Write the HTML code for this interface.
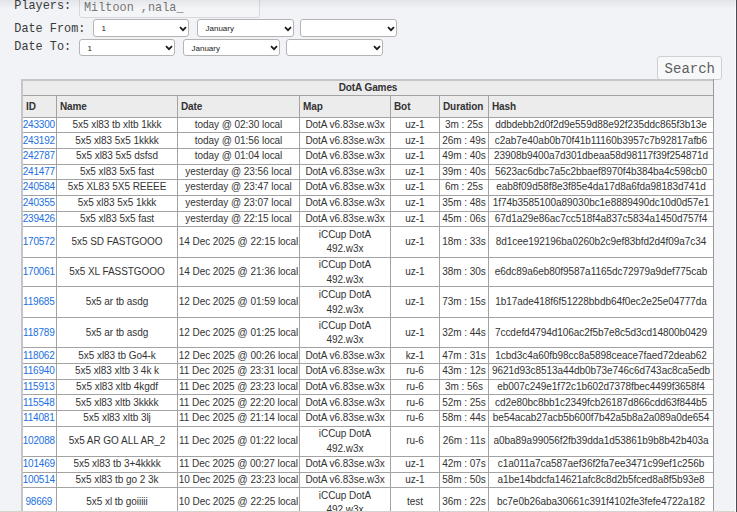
<!DOCTYPE html><html><head><meta charset="utf-8"><style>
html,body{margin:0;padding:0;}
body{width:737px;height:512px;overflow:hidden;background:#f1f3f7;position:relative;font-family:"Liberation Sans",sans-serif;}
.a{position:absolute;}
.m{font-family:"Liberation Mono",monospace;}
.c{position:absolute;letter-spacing:-0.05px;display:flex;align-items:center;justify-content:center;text-align:center;font-size:10px;line-height:14.3px;color:#333;white-space:nowrap;}
.h{position:absolute;letter-spacing:-0.1px;display:flex;align-items:center;font-size:10px;font-weight:bold;color:#333;white-space:nowrap;}
.t{position:absolute;letter-spacing:-0.05px;text-align:center;font-size:10px;line-height:14.3px;color:#333;white-space:nowrap;}
.id{color:#2170e0;margin-left:-0.7px;letter-spacing:-0.2px;}
.sel{position:absolute;background:#fff;border:1px solid #b4b4b4;border-radius:3px;box-sizing:border-box;font-size:8px;color:#222;}
.sel span{position:absolute;left:7.5px;top:4px;line-height:9px;}
.chev{position:absolute;right:5px;top:5px;}
</style></head><body>

<div class="a m" style="left:14.3px;top:-0.07px;font-size:11.85px;line-height:13.43px;color:#3a3a3a;transform:scaleY(1.13);transform-origin:0 9.87px;white-space:pre;">Players:</div>
<div class="a" style="left:79px;top:-6px;width:181px;height:24px;box-sizing:border-box;border:1px solid #d8d9dc;border-radius:3px;background:#f4f5f7;"></div>
<div class="a m" style="left:84.0px;top:1.53px;font-size:11.85px;line-height:13.43px;color:#777;transform:scaleY(1.13);transform-origin:0 9.87px;white-space:pre;">Miltoon ,nala_</div>
<div class="a m" style="left:14.3px;top:22.73px;font-size:11.85px;line-height:13.43px;color:#3a3a3a;transform:scaleY(1.13);transform-origin:0 9.87px;white-space:pre;">Date From:</div>
<div class="a m" style="left:14.3px;top:41.33px;font-size:11.85px;line-height:13.43px;color:#3a3a3a;transform:scaleY(1.13);transform-origin:0 9.87px;white-space:pre;">Date To:</div>
<div class="sel" style="left:93px;top:19px;width:96px;height:18px;"><span>1</span></div>
<svg class="a" style="left:179px;top:25.5px" width="8" height="6" viewBox="0 0 8 6"><path d="M1 1.2 L4 4.2 L7 1.2" fill="none" stroke="#1a1a1a" stroke-width="1.7"/></svg>
<div class="sel" style="left:197px;top:19px;width:97px;height:18px;"><span>January</span></div>
<svg class="a" style="left:284px;top:25.5px" width="8" height="6" viewBox="0 0 8 6"><path d="M1 1.2 L4 4.2 L7 1.2" fill="none" stroke="#1a1a1a" stroke-width="1.7"/></svg>
<div class="sel" style="left:300px;top:19px;width:97px;height:18px;"><span></span></div>
<svg class="a" style="left:387px;top:25.5px" width="8" height="6" viewBox="0 0 8 6"><path d="M1 1.2 L4 4.2 L7 1.2" fill="none" stroke="#1a1a1a" stroke-width="1.7"/></svg>
<div class="sel" style="left:79px;top:39px;width:96px;height:17px;"><span>1</span></div>
<svg class="a" style="left:165px;top:45.0px" width="8" height="6" viewBox="0 0 8 6"><path d="M1 1.2 L4 4.2 L7 1.2" fill="none" stroke="#1a1a1a" stroke-width="1.7"/></svg>
<div class="sel" style="left:183px;top:39px;width:97px;height:17px;"><span>January</span></div>
<svg class="a" style="left:270px;top:45.0px" width="8" height="6" viewBox="0 0 8 6"><path d="M1 1.2 L4 4.2 L7 1.2" fill="none" stroke="#1a1a1a" stroke-width="1.7"/></svg>
<div class="sel" style="left:286px;top:39px;width:97px;height:17px;"><span></span></div>
<svg class="a" style="left:373px;top:45.0px" width="8" height="6" viewBox="0 0 8 6"><path d="M1 1.2 L4 4.2 L7 1.2" fill="none" stroke="#1a1a1a" stroke-width="1.7"/></svg>
<div class="a" style="left:657px;top:56px;width:65px;height:24px;box-sizing:border-box;border:1px solid #cfd0d3;border-radius:3px;background:#f7f8fa;"></div>
<div class="a m" style="left:664.6px;top:61.94px;font-size:14.0px;line-height:15.86px;color:#606060;transform:scaleY(1.08);transform-origin:0 11.66px;white-space:pre;">Search</div>
<div class="a" style="left:21px;top:79px;width:693px;height:433px;background:#fff;"></div>
<div class="a" style="left:21px;top:79px;width:693px;height:38px;background:#ececec;"></div>
<div class="h" style="left:23px;top:80px;width:690px;height:14px;justify-content:center;">DotA Games</div>
<div class="h" style="left:26px;top:96px;height:21px;">ID</div>
<div class="h" style="left:60px;top:96px;height:21px;">Name</div>
<div class="h" style="left:181px;top:96px;height:21px;">Date</div>
<div class="h" style="left:303px;top:96px;height:21px;">Map</div>
<div class="h" style="left:394px;top:96px;height:21px;">Bot</div>
<div class="h" style="left:443px;top:96px;height:21px;">Duration</div>
<div class="h" style="left:492px;top:96px;height:21px;">Hash</div>
<div class="t id" style="left:23px;top:118.00px;width:33px;">243300</div>
<div class="t" style="left:57px;top:118.00px;width:120px;">5x5 xl83 tb xltb 1kkk</div>
<div class="t" style="left:178px;top:118.00px;width:121px;">today @ 02:30 local</div>
<div class="t" style="left:300px;top:118.00px;width:90px;">DotA v6.83se.w3x</div>
<div class="t" style="left:391px;top:118.00px;width:48px;">uz-1</div>
<div class="t" style="left:440px;top:118.00px;width:48px;">3m : 25s</div>
<div class="t" style="left:489px;top:118.00px;width:224px;">ddbdebb2d0f2d9e559d88e92f235ddc865f3b13e</div>
<div class="t id" style="left:23px;top:134.00px;width:33px;">243192</div>
<div class="t" style="left:57px;top:134.00px;width:120px;">5x5 xl83 5x5 1kkkk</div>
<div class="t" style="left:178px;top:134.00px;width:121px;">today @ 01:56 local</div>
<div class="t" style="left:300px;top:134.00px;width:90px;">DotA v6.83se.w3x</div>
<div class="t" style="left:391px;top:134.00px;width:48px;">uz-1</div>
<div class="t" style="left:440px;top:134.00px;width:48px;">26m : 49s</div>
<div class="t" style="left:489px;top:134.00px;width:224px;">c2ab7e40ab0b70f41b11160b3957c7b92817afb6</div>
<div class="t id" style="left:23px;top:149.00px;width:33px;">242787</div>
<div class="t" style="left:57px;top:149.00px;width:120px;">5x5 xl83 5x5 dsfsd</div>
<div class="t" style="left:178px;top:149.00px;width:121px;">today @ 01:04 local</div>
<div class="t" style="left:300px;top:149.00px;width:90px;">DotA v6.83se.w3x</div>
<div class="t" style="left:391px;top:149.00px;width:48px;">uz-1</div>
<div class="t" style="left:440px;top:149.00px;width:48px;">49m : 40s</div>
<div class="t" style="left:489px;top:149.00px;width:224px;">23908b9400a7d301dbeaa58d98117f39f254871d</div>
<div class="t id" style="left:23px;top:165.00px;width:33px;">241477</div>
<div class="t" style="left:57px;top:165.00px;width:120px;">5x5 xl83 5x5 fast</div>
<div class="t" style="left:178px;top:165.00px;width:121px;">yesterday @ 23:56 local</div>
<div class="t" style="left:300px;top:165.00px;width:90px;">DotA v6.83se.w3x</div>
<div class="t" style="left:391px;top:165.00px;width:48px;">uz-1</div>
<div class="t" style="left:440px;top:165.00px;width:48px;">39m : 40s</div>
<div class="t" style="left:489px;top:165.00px;width:224px;">5623ac6dbc7a5c2bbaef8970f4b384ba4c598cb0</div>
<div class="t id" style="left:23px;top:180.00px;width:33px;">240584</div>
<div class="t" style="left:57px;top:180.00px;width:120px;">5x5 XL83 5X5 REEEE</div>
<div class="t" style="left:178px;top:180.00px;width:121px;">yesterday @ 23:47 local</div>
<div class="t" style="left:300px;top:180.00px;width:90px;">DotA v6.83se.w3x</div>
<div class="t" style="left:391px;top:180.00px;width:48px;">uz-1</div>
<div class="t" style="left:440px;top:180.00px;width:48px;">6m : 25s</div>
<div class="t" style="left:489px;top:180.00px;width:224px;">eab8f09d58f8e3f85e4da17d8a6fda98183d741d</div>
<div class="t id" style="left:23px;top:195.50px;width:33px;">240355</div>
<div class="t" style="left:57px;top:195.50px;width:120px;">5x5 xl83 5x5 1kkk</div>
<div class="t" style="left:178px;top:195.50px;width:121px;">yesterday @ 23:07 local</div>
<div class="t" style="left:300px;top:195.50px;width:90px;">DotA v6.83se.w3x</div>
<div class="t" style="left:391px;top:195.50px;width:48px;">uz-1</div>
<div class="t" style="left:440px;top:195.50px;width:48px;">35m : 48s</div>
<div class="t" style="left:489px;top:195.50px;width:224px;">1f74b3585100a89030bc1e8889490dc10d0d57e1</div>
<div class="t id" style="left:23px;top:212.00px;width:33px;">239426</div>
<div class="t" style="left:57px;top:212.00px;width:120px;">5x5 xl83 5x5 fast</div>
<div class="t" style="left:178px;top:212.00px;width:121px;">yesterday @ 22:15 local</div>
<div class="t" style="left:300px;top:212.00px;width:90px;">DotA v6.83se.w3x</div>
<div class="t" style="left:391px;top:212.00px;width:48px;">uz-1</div>
<div class="t" style="left:440px;top:212.00px;width:48px;">45m : 06s</div>
<div class="t" style="left:489px;top:212.00px;width:224px;">67d1a29e86ac7cc518f4a837c5834a1450d757f4</div>
<div class="t id" style="left:23px;top:234.50px;width:33px;">170572</div>
<div class="t" style="left:57px;top:234.50px;width:120px;">5x5 SD FASTGOOO</div>
<div class="t" style="left:178px;top:234.50px;width:121px;">14 Dec 2025 @ 22:15 local</div>
<div class="t" style="left:300px;top:227.50px;width:90px;line-height:14.6px;">iCCup DotA<br>492.w3x</div>
<div class="t" style="left:391px;top:234.50px;width:48px;">uz-1</div>
<div class="t" style="left:440px;top:234.50px;width:48px;">18m : 33s</div>
<div class="t" style="left:489px;top:234.50px;width:224px;">8d1cee192196ba0260b2c9ef83bfd2d4f09a7c34</div>
<div class="t id" style="left:23px;top:265.30px;width:33px;">170061</div>
<div class="t" style="left:57px;top:265.30px;width:120px;">5x5 XL FASSTGOOO</div>
<div class="t" style="left:178px;top:265.30px;width:121px;">14 Dec 2025 @ 21:36 local</div>
<div class="t" style="left:300px;top:258.30px;width:90px;line-height:14.6px;">iCCup DotA<br>492.w3x</div>
<div class="t" style="left:391px;top:265.30px;width:48px;">uz-1</div>
<div class="t" style="left:440px;top:265.30px;width:48px;">38m : 30s</div>
<div class="t" style="left:489px;top:265.30px;width:224px;">e6dc89a6eb80f9587a1165dc72979a9def775cab</div>
<div class="t id" style="left:23px;top:295.00px;width:33px;">119685</div>
<div class="t" style="left:57px;top:295.00px;width:120px;">5x5 ar tb asdg</div>
<div class="t" style="left:178px;top:295.00px;width:121px;">12 Dec 2025 @ 01:59 local</div>
<div class="t" style="left:300px;top:288.00px;width:90px;line-height:14.6px;">iCCup DotA<br>492.w3x</div>
<div class="t" style="left:391px;top:295.00px;width:48px;">uz-1</div>
<div class="t" style="left:440px;top:295.00px;width:48px;">73m : 15s</div>
<div class="t" style="left:489px;top:295.00px;width:224px;">1b17ade418f6f51228bbdb64f0ec2e25e04777da</div>
<div class="t id" style="left:23px;top:325.50px;width:33px;">118789</div>
<div class="t" style="left:57px;top:325.50px;width:120px;">5x5 ar tb asdg</div>
<div class="t" style="left:178px;top:325.50px;width:121px;">12 Dec 2025 @ 01:25 local</div>
<div class="t" style="left:300px;top:318.50px;width:90px;line-height:14.6px;">iCCup DotA<br>492.w3x</div>
<div class="t" style="left:391px;top:325.50px;width:48px;">uz-1</div>
<div class="t" style="left:440px;top:325.50px;width:48px;">32m : 44s</div>
<div class="t" style="left:489px;top:325.50px;width:224px;">7ccdefd4794d106ac2f5b7e8c5d3cd14800b0429</div>
<div class="t id" style="left:23px;top:349.00px;width:33px;">118062</div>
<div class="t" style="left:57px;top:349.00px;width:120px;">5x5 xl83 tb Go4-k</div>
<div class="t" style="left:178px;top:349.00px;width:121px;">12 Dec 2025 @ 00:26 local</div>
<div class="t" style="left:300px;top:349.00px;width:90px;">DotA v6.83se.w3x</div>
<div class="t" style="left:391px;top:349.00px;width:48px;">kz-1</div>
<div class="t" style="left:440px;top:349.00px;width:48px;">47m : 31s</div>
<div class="t" style="left:489px;top:349.00px;width:224px;">1cbd3c4a60fb98cc8a5898ceace7faed72deab62</div>
<div class="t id" style="left:23px;top:364.00px;width:33px;">116940</div>
<div class="t" style="left:57px;top:364.00px;width:120px;">5x5 xl83 xltb 3 4k k</div>
<div class="t" style="left:178px;top:364.00px;width:121px;">11 Dec 2025 @ 23:31 local</div>
<div class="t" style="left:300px;top:364.00px;width:90px;">DotA v6.83se.w3x</div>
<div class="t" style="left:391px;top:364.00px;width:48px;">ru-6</div>
<div class="t" style="left:440px;top:364.00px;width:48px;">43m : 12s</div>
<div class="t" style="left:489px;top:364.00px;width:224px;">9621d93c8513a44db0b73e746c6d743ac8ca5edb</div>
<div class="t id" style="left:23px;top:380.00px;width:33px;">115913</div>
<div class="t" style="left:57px;top:380.00px;width:120px;">5x5 xl83 xltb 4kgdf</div>
<div class="t" style="left:178px;top:380.00px;width:121px;">11 Dec 2025 @ 23:23 local</div>
<div class="t" style="left:300px;top:380.00px;width:90px;">DotA v6.83se.w3x</div>
<div class="t" style="left:391px;top:380.00px;width:48px;">ru-6</div>
<div class="t" style="left:440px;top:380.00px;width:48px;">3m : 56s</div>
<div class="t" style="left:489px;top:380.00px;width:224px;">eb007c249e1f72c1b602d7378fbec4499f3658f4</div>
<div class="t id" style="left:23px;top:395.50px;width:33px;">115548</div>
<div class="t" style="left:57px;top:395.50px;width:120px;">5x5 xl83 xltb 3kkkk</div>
<div class="t" style="left:178px;top:395.50px;width:121px;">11 Dec 2025 @ 22:20 local</div>
<div class="t" style="left:300px;top:395.50px;width:90px;">DotA v6.83se.w3x</div>
<div class="t" style="left:391px;top:395.50px;width:48px;">ru-6</div>
<div class="t" style="left:440px;top:395.50px;width:48px;">52m : 25s</div>
<div class="t" style="left:489px;top:395.50px;width:224px;">cd2e80bc8bb1c2349fcb26187d866cdd63f844b5</div>
<div class="t id" style="left:23px;top:411.00px;width:33px;">114081</div>
<div class="t" style="left:57px;top:411.00px;width:120px;">5x5 xl83 xltb 3lj</div>
<div class="t" style="left:178px;top:411.00px;width:121px;">11 Dec 2025 @ 21:14 local</div>
<div class="t" style="left:300px;top:411.00px;width:90px;">DotA v6.83se.w3x</div>
<div class="t" style="left:391px;top:411.00px;width:48px;">ru-6</div>
<div class="t" style="left:440px;top:411.00px;width:48px;">58m : 44s</div>
<div class="t" style="left:489px;top:411.00px;width:224px;">be54acab27acb5b600f7b42a5b8a2a089a0de654</div>
<div class="t id" style="left:23px;top:434.00px;width:33px;">102088</div>
<div class="t" style="left:57px;top:434.00px;width:120px;">5x5 AR GO ALL AR_2</div>
<div class="t" style="left:178px;top:434.00px;width:121px;">11 Dec 2025 @ 01:22 local</div>
<div class="t" style="left:300px;top:427.00px;width:90px;line-height:14.6px;">iCCup DotA<br>492.w3x</div>
<div class="t" style="left:391px;top:434.00px;width:48px;">ru-6</div>
<div class="t" style="left:440px;top:434.00px;width:48px;">26m : 11s</div>
<div class="t" style="left:489px;top:434.00px;width:224px;">a0ba89a99056f2fb39dda1d53861b9b8b42b403a</div>
<div class="t id" style="left:23px;top:457.00px;width:33px;">101469</div>
<div class="t" style="left:57px;top:457.00px;width:120px;">5x5 xl83 tb 3+4kkkk</div>
<div class="t" style="left:178px;top:457.00px;width:121px;">11 Dec 2025 @ 00:27 local</div>
<div class="t" style="left:300px;top:457.00px;width:90px;">DotA v6.83se.w3x</div>
<div class="t" style="left:391px;top:457.00px;width:48px;">uz-1</div>
<div class="t" style="left:440px;top:457.00px;width:48px;">42m : 07s</div>
<div class="t" style="left:489px;top:457.00px;width:224px;">c1a011a7ca587aef36f2fa7ee3471c99ef1c256b</div>
<div class="t id" style="left:23px;top:472.50px;width:33px;">100514</div>
<div class="t" style="left:57px;top:472.50px;width:120px;">5x5 xl83 tb go 2 3k</div>
<div class="t" style="left:178px;top:472.50px;width:121px;">10 Dec 2025 @ 23:23 local</div>
<div class="t" style="left:300px;top:472.50px;width:90px;">DotA v6.83se.w3x</div>
<div class="t" style="left:391px;top:472.50px;width:48px;">uz-1</div>
<div class="t" style="left:440px;top:472.50px;width:48px;">58m : 50s</div>
<div class="t" style="left:489px;top:472.50px;width:224px;">a1be14bdcfa14621afc8c8d2b5fced8a8f5b93e8</div>
<div class="t id" style="left:23px;top:495.00px;width:33px;">98669</div>
<div class="t" style="left:57px;top:495.00px;width:120px;">5x5 xl tb goiiiii</div>
<div class="t" style="left:178px;top:495.00px;width:121px;">10 Dec 2025 @ 22:25 local</div>
<div class="t" style="left:300px;top:488.80px;width:90px;line-height:14.6px;">iCCup DotA<br>492.w3x</div>
<div class="t" style="left:391px;top:495.00px;width:48px;">test</div>
<div class="t" style="left:440px;top:495.00px;width:48px;">36m : 22s</div>
<div class="t" style="left:489px;top:495.00px;width:224px;">bc7e0b26aba30661c391f4102fe3fefe4722a182</div>
<div class="a" style="left:21px;top:95px;width:692px;height:1px;background:#a3a3a3;"></div>
<div class="a" style="left:21px;top:117px;width:692px;height:1px;background:#a3a3a3;"></div>
<div class="a" style="left:21px;top:132px;width:692px;height:1px;background:#a3a3a3;"></div>
<div class="a" style="left:21px;top:148px;width:692px;height:1px;background:#a3a3a3;"></div>
<div class="a" style="left:21px;top:164px;width:692px;height:1px;background:#a3a3a3;"></div>
<div class="a" style="left:21px;top:179px;width:692px;height:1px;background:#a3a3a3;"></div>
<div class="a" style="left:21px;top:195px;width:692px;height:1px;background:#a3a3a3;"></div>
<div class="a" style="left:21px;top:211px;width:692px;height:1px;background:#a3a3a3;"></div>
<div class="a" style="left:21px;top:226px;width:692px;height:1px;background:#a3a3a3;"></div>
<div class="a" style="left:21px;top:257px;width:692px;height:1px;background:#a3a3a3;"></div>
<div class="a" style="left:21px;top:286px;width:692px;height:1px;background:#a3a3a3;"></div>
<div class="a" style="left:21px;top:317px;width:692px;height:1px;background:#a3a3a3;"></div>
<div class="a" style="left:21px;top:347px;width:692px;height:1px;background:#a3a3a3;"></div>
<div class="a" style="left:21px;top:363px;width:692px;height:1px;background:#a3a3a3;"></div>
<div class="a" style="left:21px;top:379px;width:692px;height:1px;background:#a3a3a3;"></div>
<div class="a" style="left:21px;top:394px;width:692px;height:1px;background:#a3a3a3;"></div>
<div class="a" style="left:21px;top:410px;width:692px;height:1px;background:#a3a3a3;"></div>
<div class="a" style="left:21px;top:426px;width:692px;height:1px;background:#a3a3a3;"></div>
<div class="a" style="left:21px;top:456px;width:692px;height:1px;background:#a3a3a3;"></div>
<div class="a" style="left:21px;top:472px;width:692px;height:1px;background:#a3a3a3;"></div>
<div class="a" style="left:21px;top:487px;width:692px;height:1px;background:#a3a3a3;"></div>
<div class="a" style="left:56px;top:95px;width:1px;height:417px;background:#a3a3a3;"></div>
<div class="a" style="left:177px;top:95px;width:1px;height:417px;background:#a3a3a3;"></div>
<div class="a" style="left:299px;top:95px;width:1px;height:417px;background:#a3a3a3;"></div>
<div class="a" style="left:390px;top:95px;width:1px;height:417px;background:#a3a3a3;"></div>
<div class="a" style="left:439px;top:95px;width:1px;height:417px;background:#a3a3a3;"></div>
<div class="a" style="left:488px;top:95px;width:1px;height:417px;background:#a3a3a3;"></div>
<div class="a" style="left:21px;top:79px;width:693px;height:2px;background:#c6c6c6;"></div>
<div class="a" style="left:21px;top:79px;width:2px;height:433px;background:#c6c6c6;"></div>
<div class="a" style="left:713px;top:79px;width:1px;height:433px;background:#9a9a9a;"></div>
<div class="a" style="left:0;top:511px;width:737px;height:1px;background:#d6d3cf;"></div>
<div class="a" style="left:735px;top:0;width:1px;height:512px;background:#fafbfc;"></div>
<div class="a" style="left:736px;top:0;width:1px;height:512px;background:#4a4b55;"></div>
<div class="a" style="left:0;top:0;width:736px;height:9px;background:linear-gradient(rgba(20,20,40,0.065),rgba(20,20,40,0));"></div>
</body></html>
